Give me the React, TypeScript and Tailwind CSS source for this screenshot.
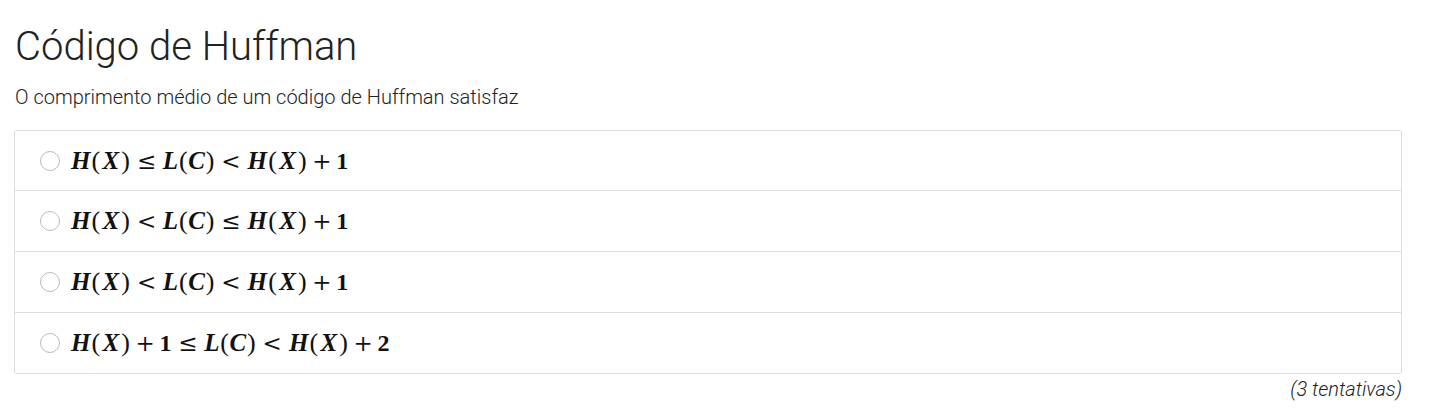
import React from 'react';

const roboto = { fontFamily: 'Roboto, "Liberation Sans", sans-serif' };
const dejavu = { fontFamily: '"DejaVu Serif", serif' };

// widths from KaTeX metrics at 24px
type Tok = { t: string; w: string; cls?: string; space?: string; dv?: boolean };

const H: Tok = { t: 'H', w: 'w-[21.3px]', cls: 'italic font-bold text-[25px]' };
const X: Tok = { t: 'X', w: 'w-[20.4px]', cls: 'italic font-bold text-[25px]' };
const L: Tok = { t: 'L', w: 'w-[16.3px]', cls: 'italic font-bold text-[25px]' };
const C: Tok = { t: 'C', w: 'w-[17.4px]', cls: 'italic font-bold text-[25px]' };
const lp: Tok = { t: '(', w: 'w-[9.3px]', cls: 'text-[26px]' };
const rp: Tok = { t: ')', w: 'w-[9.3px]', cls: 'text-[26px]' };
const le: Tok = { t: '≤', w: 'w-[18.7px]', space: 'mx-[6.7px]', cls: 'text-[23px]', dv: true };
const lt: Tok = { t: '<', w: 'w-[18.7px]', space: 'mx-[6.7px]', cls: 'text-[23px]', dv: true };
const plus: Tok = { t: '+', w: 'w-[18.7px]', space: 'mx-[5.3px]', cls: 'text-[23px]', dv: true };
const one: Tok = { t: '1', w: 'w-[12px]', cls: 'font-bold' };
const two: Tok = { t: '2', w: 'w-[12px]', cls: 'font-bold' };

const HX = [H, lp, X, rp];
const LC = [L, lp, C, rp];

const options: Tok[][] = [
  [...HX, le, ...LC, lt, ...HX, plus, one],
  [...HX, lt, ...LC, le, ...HX, plus, one],
  [...HX, lt, ...LC, lt, ...HX, plus, one],
  [...HX, plus, one, le, ...LC, lt, ...HX, plus, two],
];

function MathExpr({ toks }: { toks: Tok[] }) {
  return (
    <span
      className="flex items-baseline text-[24px] leading-none text-[#111]"
      style={{ fontFamily: '"Liberation Serif", "DejaVu Serif", serif' }}
    >
      {toks.map((tk, i) => (
        <span
          key={i}
          className={`inline-block text-center ${tk.w} ${tk.space ?? ''} ${tk.cls ?? ''}`}
          style={tk.dv ? dejavu : undefined}
        >
          {tk.t}
        </span>
      ))}
    </span>
  );
}

export default function App() {
  return (
    <div className="bg-white min-h-[409px] text-[#222]" style={roboto}>
      <div className="pl-[14px] w-[1402px] pt-[23px]">
        <h2 className="text-[40px] leading-[48px] font-light pl-[1px]">Código de Huffman</h2>
        <p className="mt-[12px] text-[20px] leading-[28px] font-light pl-[1px]">
          O comprimento médio de um código de Huffman satisfaz
        </p>
        <div className="mt-[19px] border border-[#dedede] rounded-[3px] divide-y divide-[#dedede]">
          {options.map((o, i) => (
            <label
              key={i}
              className={`box-content flex items-center pl-[25px] ${i === 0 ? 'h-[59px]' : 'h-[60px]'}`}
            >
              <span className="w-[20px] h-[20px] rounded-full border border-[#b8bcc0] bg-white mr-[10px]" />
              <MathExpr toks={o} />
            </label>
          ))}
        </div>
        <div className="text-right text-[20px] leading-[28px] font-light italic mt-[1px]">(3 tentativas)</div>
      </div>
    </div>
  );
}
